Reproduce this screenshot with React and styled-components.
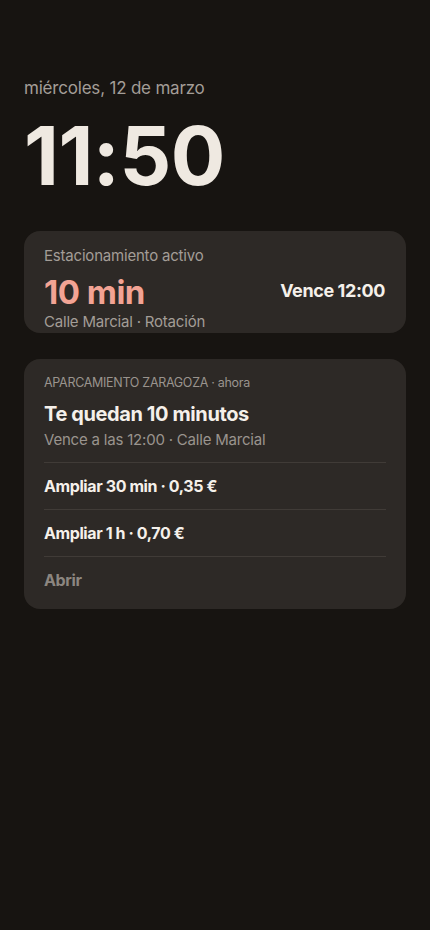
import React from 'react';
import styled, { createGlobalStyle } from 'styled-components';

const GlobalStyle = createGlobalStyle`
  html, body {
    margin: 0;
    padding: 0;
    background: #171411;
  }
  body {
    font-family: 'Inter', 'Noto Sans', sans-serif;
  }
`;

const Screen = styled.div`
  min-height: 930px;
  box-sizing: border-box;
  padding: 76px 24px 0;
  background: #171411;
  display: flex;
  flex-direction: column;
`;

const DateLine = styled.div`
  font-size: 17px;
  color: #a39d97;
  letter-spacing: -0.2px;
  line-height: 24px;
`;

const Clock = styled.div`
  margin-top: 8px;
  font-size: 81px;
  font-weight: 700;
  color: #efe9e1;
  letter-spacing: -0.5px;
  line-height: 96px;
`;

const Card = styled.div`
  background: #2d2926;
  border-radius: 16px;
  box-sizing: border-box;
  padding: ${p => p.$pad};
  margin-top: ${p => p.$top}px;
  height: ${p => (p.$h ? `${p.$h}px` : 'auto')};
  overflow: hidden;
`;

const Label = styled.div`
  font-size: 15px;
  color: #a39d97;
  line-height: 20px;
  letter-spacing: -0.2px;
`;

const StatusRow = styled.div`
  display: flex;
  align-items: center;
  justify-content: space-between;
  margin-top: 7px;
  margin-bottom: 1px;
`;

const Minutes = styled.div`
  font-size: 33px;
  font-weight: 700;
  color: #f2a394;
  letter-spacing: -0.5px;
  line-height: 38px;
`;

const Expiry = styled.div`
  font-size: 18px;
  font-weight: 700;
  color: #f5f0ea;
  letter-spacing: -0.4px;
  margin-top: -4px;
`;

const AppName = styled.div`
  font-size: 12.5px;
  color: #9a948e;
  line-height: 18px;
  letter-spacing: -0.3px;
`;

const Title = styled.div`
  margin-top: 9px;
  font-size: 20px;
  font-weight: 700;
  color: #f5f0ea;
  line-height: 26px;
  letter-spacing: -0.4px;
`;

const Body = styled.div`
  margin-top: 3px;
  font-size: 15px;
  color: #9a948e;
  line-height: 20px;
  letter-spacing: -0.2px;
`;

const Actions = styled.div`
  margin-top: 12px;
  display: flex;
  flex-direction: column;
`;

const Action = styled.div`
  height: 46px;
  display: flex;
  align-items: center;
  border-top: 1px solid #403b37;
  font-size: 16px;
  font-weight: 700;
  letter-spacing: -0.4px;
  color: ${p => (p.$muted ? '#8c8680' : '#f5f0ea')};
`;

export default function App() {
  return (
    <>
      <GlobalStyle />
      <Screen>
        <DateLine>miércoles, 12 de marzo</DateLine>
        <Clock>11:50</Clock>

        <Card $top={27} $h={102} $pad="15px 21px 0 20px">
          <Label>Estacionamiento activo</Label>
          <StatusRow>
            <Minutes>10 min</Minutes>
            <Expiry>Vence 12:00</Expiry>
          </StatusRow>
          <Label>Calle Marcial · Rotación</Label>
        </Card>

        <Card $top={26} $pad="15px 20px 6px 20px">
          <AppName>APARCAMIENTO ZARAGOZA · ahora</AppName>
          <Title>Te quedan 10 minutos</Title>
          <Body>Vence a las 12:00 · Calle Marcial</Body>
          <Actions>
            <Action>Ampliar 30 min · 0,35 €</Action>
            <Action>Ampliar 1 h · 0,70 €</Action>
            <Action $muted>Abrir</Action>
          </Actions>
        </Card>
      </Screen>
    </>
  );
}
